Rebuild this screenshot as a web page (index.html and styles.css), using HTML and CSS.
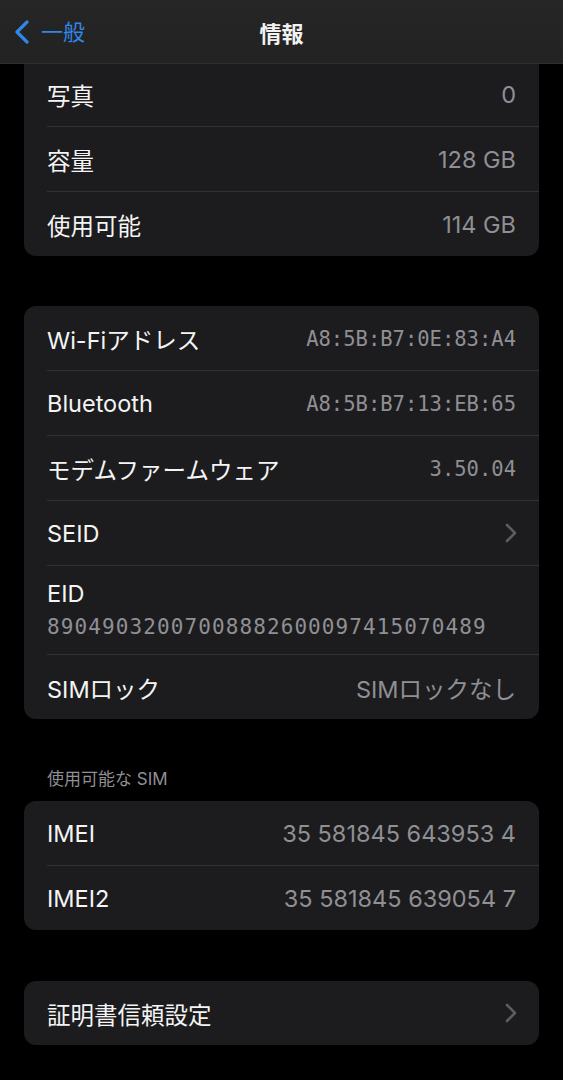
FILE: index.html
```html
<!DOCTYPE html>
<html lang="ja">
<head>
    <meta charset="UTF-8">
    <meta name="viewport" content="width=device-width, initial-scale=1.0">
    <title>情報</title>
    <link rel="stylesheet" href="styles.css">
</head>
<body>
    <header class="nav-bar">
        <a class="back-link" href="#">
            <svg class="back-chevron" viewBox="0 0 16 24" width="16" height="24">
                <path d="M13 2 L3 12 L13 22" fill="none" stroke="#2f87e6" stroke-width="3.2" stroke-linecap="round" stroke-linejoin="round"/>
            </svg>
            <span>一般</span>
        </a>
        <h1>情報</h1>
    </header>

    <main class="content">
        <!-- storage -->
        <div class="group first-group">
            <div class="row"><span class="label">写真</span><span class="value">0</span></div>
            <div class="row"><span class="label">容量</span><span class="value">128 GB</span></div>
            <div class="row"><span class="label">使用可能</span><span class="value">114 GB</span></div>
        </div>

        <!-- network -->
        <div class="group">
            <div class="row"><span class="label">Wi-Fiアドレス</span><span class="value mono">A8:5B:B7:0E:83:A4</span></div>
            <div class="row"><span class="label">Bluetooth</span><span class="value mono">A8:5B:B7:13:EB:65</span></div>
            <div class="row"><span class="label">モデムファームウェア</span><span class="value mono">3.50.04</span></div>
            <div class="row link-row">
                <span class="label">SEID</span>
                <svg class="chevron" viewBox="0 0 12 20" width="12" height="20">
                    <path d="M2 2 L10 10 L2 18" fill="none" stroke="#5c5c61" stroke-width="2.6" stroke-linecap="round" stroke-linejoin="round"/>
                </svg>
            </div>
            <div class="row eid-row">
                <span class="label">EID</span>
                <span class="eid-number">89049032007008882600097415070489</span>
            </div>
            <div class="row"><span class="label">SIMロック</span><span class="value">SIMロックなし</span></div>
        </div>

        <p class="section-title">使用可能な SIM</p>
        <div class="group sim-group">
            <div class="row"><span class="label">IMEI</span><span class="value">35 581845 643953 4</span></div>
            <div class="row"><span class="label">IMEI2</span><span class="value">35 581845 639054 7</span></div>
        </div>

        <div class="group last-group">
            <div class="row link-row">
                <span class="label">証明書信頼設定</span>
                <svg class="chevron" viewBox="0 0 12 20" width="12" height="20">
                    <path d="M2 2 L10 10 L2 18" fill="none" stroke="#5c5c61" stroke-width="2.6" stroke-linecap="round" stroke-linejoin="round"/>
                </svg>
            </div>
        </div>
    </main>
</body>
</html>
```

FILE: styles.css
```css
body {
    margin: 0;
    background: #000;
    color: #f4f4f5;
    font-family: Inter, "Noto Sans CJK JP", sans-serif;
}
.nav-bar {
    position: fixed;
    top: 0;
    left: 0;
    right: 0;
    height: 63px;
    display: flex;
    align-items: center;
    justify-content: center;
    background: linear-gradient(#262626, #222223);
    border-bottom: 1px solid #2e2e30;
    z-index: 10;
}
.nav-bar h1 {
    margin: 0;
    font-size: 22px;
    font-weight: 700;
    color: #f2f2f2;
}
.back-link {
    position: absolute;
    left: 14px;
    top: 20px;
    display: flex;
    align-items: center;
    gap: 11px;
    color: #2f87e6;
    text-decoration: none;
    font-size: 22px;
    line-height: 24px;
}
.back-chevron {
    display: block;
}
.content {
    padding: 62px 24px 20px 24px;
}
.group {
    background: #1c1c1e;
    border-radius: 12px;
    margin-bottom: 50px;
    overflow: hidden;
}
.first-group {
    border-top-left-radius: 0;
    border-top-right-radius: 0;
}
.sim-group {
    margin-bottom: 51px;
}
.last-group {
    margin-bottom: 0;
}
.row {
    height: 64px;
    margin-left: 23px;
    padding-right: 23px;
    display: flex;
    align-items: center;
    justify-content: space-between;
    border-top: 1px solid #323235;
    font-size: 23.5px;
}
.row:first-child {
    border-top: none;
}
.label {
    padding-top: 1px;
}
.value {
    color: #8f8f94;
    padding-top: 1px;
}
.mono {
    font-family: "DejaVu Sans Mono", monospace;
    font-size: 20.5px;
}
.link-row .chevron {
    display: block;
    margin-right: -1px;
}
.eid-row {
    height: auto;
    display: block;
    padding-top: 14px;
    padding-bottom: 13px;
}
.eid-row .label {
    display: block;
    line-height: 28px;
    padding-top: 0;
}
.eid-number {
    display: block;
    margin-top: 5px;
    line-height: 28px;
    color: #8f8f94;
    font-family: "DejaVu Sans Mono", monospace;
    font-size: 21px;
    letter-spacing: 1.1px;
}
.section-title {
    margin: 0;
    padding: 0 23px 12px 23px;
    line-height: 20px;
    font-size: 17px;
    color: #8f8f94;
}
```
